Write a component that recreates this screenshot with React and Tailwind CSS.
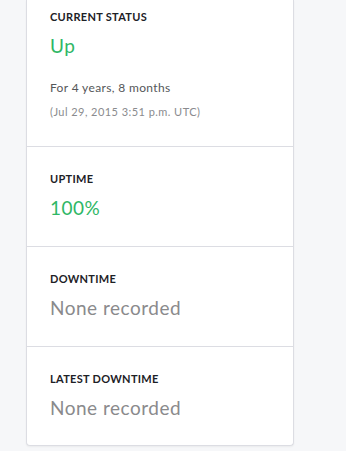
import React from 'react';

const font = { fontFamily: 'Lato, "Open Sans", sans-serif' };

function Label({ children }) {
  return (
    <p className="text-[11px] leading-[14px] font-bold tracking-[0.3px] text-[#1d2126] uppercase">
      {children}
    </p>
  );
}

function Stat({ label, value, tone = 'gray', last = false }) {
  return (
    <div className={`px-[23px] pt-[25px] ${last ? 'pb-[25px]' : 'pb-[26px] border-b border-[#dcdde3]'}`}>
      <Label>{label}</Label>
      <p
        className={`mt-[10px] text-[19px] leading-[24px] tracking-[0.5px] ${
          tone === 'green' ? 'text-[#2fb766]' : 'text-[#8a8a8c]'
        }`}
      >
        {value}
      </p>
    </div>
  );
}

export default function App() {
  return (
    <div className="min-h-screen bg-[#f6f7f9]" style={font}>
      <div className="ml-[26px] w-[268px] bg-white border border-t-0 border-[#dcdde3] rounded-b-[4px] shadow-[0_1px_2px_rgba(0,0,0,0.05)]">
        {/* Current status */}
        <div className="px-[23px] pt-[10px] pb-[26px] border-b border-[#dcdde3]">
          <Label>Current Status</Label>
          <p className="mt-[10px] text-[19px] leading-[24px] tracking-[0.5px] text-[#2fb766]">Up</p>
          <p className="mt-[22px] text-[12px] leading-[16px] tracking-[0.35px] text-[#555759]">For 4 years, 8 months</p>
          <p className="mt-[8px] text-[11px] leading-[16px] tracking-[0.45px] text-[#8a8b8e]">(Jul 29, 2015 3:51 p.m. UTC)</p>
        </div>

        <Stat label="Uptime" value="100%" tone="green" />
        <Stat label="Downtime" value="None recorded" />
        <Stat label="Latest Downtime" value="None recorded" last />
      </div>
    </div>
  );
}
